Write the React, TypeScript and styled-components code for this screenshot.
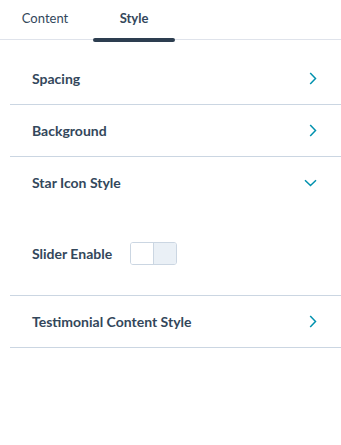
import React, { useState } from "react";
import styled, { createGlobalStyle } from "styled-components";

const GlobalStyle = createGlobalStyle`
  html, body {
    margin: 0;
    padding: 0;
    background: #ffffff;
  }
  body {
    font-family: "Lato", "Noto Sans", sans-serif;
    color: #33475b;
  }
`;

const Panel = styled.div`
  width: 341px;
  display: flex;
  flex-direction: column;
`;

const TabBar = styled.div`
  display: flex;
  gap: 7px;
  padding-left: 4px;
  border-bottom: 1px solid #dfe3eb;
  height: 39px;
`;

const Tab = styled.button<{ $active?: boolean }>`
  position: relative;
  width: 82px;
  height: 39px;
  padding: 0 0 4px 0;
  border: none;
  background: none;
  font-family: inherit;
  font-size: 13px;
  font-weight: ${(p) => (p.$active ? 700 : 400)};
  color: #33475b;
  cursor: pointer;

  &::after {
    content: "";
    display: ${(p) => (p.$active ? "block" : "none")};
    position: absolute;
    left: 0;
    right: 0;
    bottom: -3px;
    height: 4px;
    border-radius: 2px;
    background: #2d3e50;
  }
`;

const Sections = styled.div`
  display: flex;
  flex-direction: column;
  margin: 13px 0 0 10px;
`;

const Section = styled.div`
  border-bottom: 1px solid #cbd6e2;
`;

const Header = styled.button`
  width: 100%;
  height: 51px;
  display: flex;
  align-items: center;
  justify-content: space-between;
  padding: 0 24px 0 22px;
  border: none;
  background: none;
  font-family: inherit;
  font-size: 14px;
  font-weight: 700;
  color: #33475b;
  cursor: pointer;
  text-align: left;
`;

const Body = styled.div`
  display: flex;
  align-items: center;
  gap: 18px;
  padding: 34px 22px 30px;
`;

const Label = styled.span`
  font-size: 14px;
  font-weight: 700;
`;

const Toggle = styled.div`
  display: flex;
  width: 47px;
  height: 23px;
  box-sizing: border-box;
  border: 1px solid #cbd6e2;
  border-radius: 3px;
  overflow: hidden;
  cursor: pointer;
`;

const ToggleHalf = styled.div<{ $filled?: boolean }>`
  flex: 1;
  background: ${(p) => (p.$filled ? "#eaf0f6" : "#ffffff")};
  & + & {
    border-left: 1px solid #cbd6e2;
  }
`;

const Chevron = ({ open }: { open?: boolean }) =>
  open ? (
    <svg width="13" height="8" viewBox="0 0 13 8" fill="none">
      <path d="M1 1.2l5.5 5.3 5.5-5.3" stroke="#0091ae" strokeWidth="1.5" />
    </svg>
  ) : (
    <svg width="8" height="13" viewBox="0 0 8 13" fill="none">
      <path d="M1.2 1l5.3 5.5-5.3 5.5" stroke="#0091ae" strokeWidth="1.5" />
    </svg>
  );

const sections = ["Spacing", "Background", "Star Icon Style", "Testimonial Content Style"];

export default function App() {
  const [tab, setTab] = useState("Style");
  const [open, setOpen] = useState("Star Icon Style");
  const [enabled, setEnabled] = useState(false);

  return (
    <Panel>
      <GlobalStyle />
      <TabBar>
        {["Content", "Style"].map((t) => (
          <Tab key={t} $active={tab === t} onClick={() => setTab(t)}>
            {t}
          </Tab>
        ))}
      </TabBar>
      <Sections>
        {sections.map((s) => (
          <Section key={s}>
            <Header onClick={() => setOpen(open === s ? "" : s)}>
              {s}
              <Chevron open={open === s} />
            </Header>
            {open === s && (
              <Body>
                <Label>Slider Enable</Label>
                <Toggle onClick={() => setEnabled(!enabled)}>
                  <ToggleHalf $filled={enabled} />
                  <ToggleHalf $filled={!enabled} />
                </Toggle>
              </Body>
            )}
          </Section>
        ))}
      </Sections>
    </Panel>
  );
}
